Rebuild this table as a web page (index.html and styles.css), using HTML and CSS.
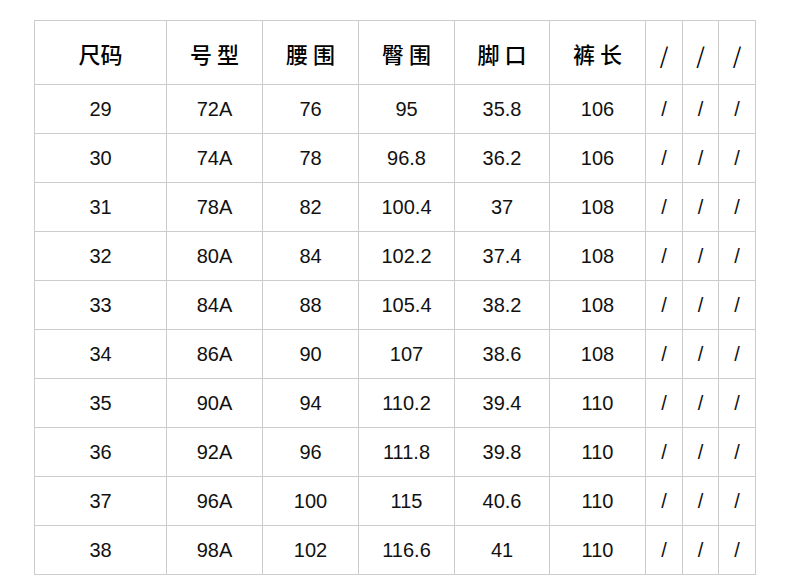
FILE: index.html
```html
<!DOCTYPE html>
<html lang="zh">
<head>
<meta charset="utf-8">
<link rel="stylesheet" href="styles.css">
</head>
<body>
<div class="table">
  <div class="cell head">尺码</div>
  <div class="cell head sp">号型</div>
  <div class="cell head sp">腰围</div>
  <div class="cell head sp">臀围</div>
  <div class="cell head sp">脚口</div>
  <div class="cell head sp">裤长</div>
  <div class="cell head slash">/</div>
  <div class="cell head slash">/</div>
  <div class="cell head slash">/</div>

  <div class="cell">29</div><div class="cell">72A</div><div class="cell">76</div><div class="cell">95</div><div class="cell">35.8</div><div class="cell">106</div><div class="cell">/</div><div class="cell">/</div><div class="cell">/</div>
  <div class="cell">30</div><div class="cell">74A</div><div class="cell">78</div><div class="cell">96.8</div><div class="cell">36.2</div><div class="cell">106</div><div class="cell">/</div><div class="cell">/</div><div class="cell">/</div>
  <div class="cell">31</div><div class="cell">78A</div><div class="cell">82</div><div class="cell">100.4</div><div class="cell">37</div><div class="cell">108</div><div class="cell">/</div><div class="cell">/</div><div class="cell">/</div>
  <div class="cell">32</div><div class="cell">80A</div><div class="cell">84</div><div class="cell">102.2</div><div class="cell">37.4</div><div class="cell">108</div><div class="cell">/</div><div class="cell">/</div><div class="cell">/</div>
  <div class="cell">33</div><div class="cell">84A</div><div class="cell">88</div><div class="cell">105.4</div><div class="cell">38.2</div><div class="cell">108</div><div class="cell">/</div><div class="cell">/</div><div class="cell">/</div>
  <div class="cell">34</div><div class="cell">86A</div><div class="cell">90</div><div class="cell">107</div><div class="cell">38.6</div><div class="cell">108</div><div class="cell">/</div><div class="cell">/</div><div class="cell">/</div>
  <div class="cell">35</div><div class="cell">90A</div><div class="cell">94</div><div class="cell">110.2</div><div class="cell">39.4</div><div class="cell">110</div><div class="cell">/</div><div class="cell">/</div><div class="cell">/</div>
  <div class="cell">36</div><div class="cell">92A</div><div class="cell">96</div><div class="cell">111.8</div><div class="cell">39.8</div><div class="cell">110</div><div class="cell">/</div><div class="cell">/</div><div class="cell">/</div>
  <div class="cell">37</div><div class="cell">96A</div><div class="cell">100</div><div class="cell">115</div><div class="cell">40.6</div><div class="cell">110</div><div class="cell">/</div><div class="cell">/</div><div class="cell">/</div>
  <div class="cell">38</div><div class="cell">98A</div><div class="cell">102</div><div class="cell">116.6</div><div class="cell">41</div><div class="cell">110</div><div class="cell">/</div><div class="cell">/</div><div class="cell">/</div>
</div>
</body>
</html>
```
FILE: styles.css
```css
html, body {
  margin: 0;
  padding: 0;
  background: #ffffff;
}
body {
  font-family: "Liberation Sans", "Noto Sans CJK SC", sans-serif;
  color: #111111;
}
.table {
  display: grid;
  grid-template-columns: 131px 95px 95px 95px 94px 95px 36px 35px 36px;
  grid-template-rows: 63px repeat(10, 48px);
  gap: 1px;
  padding: 1px;
  background: #cccccc;
  width: max-content;
  margin: 20px 0 0 34px;
}
.cell {
  background: #ffffff;
  display: flex;
  align-items: center;
  justify-content: center;
  font-size: 20px;
  line-height: 1;
}
.head {
  font-family: "Noto Sans CJK SC", sans-serif;
  font-weight: 500;
  font-size: 22px;
  color: #000000;
}
.sp {
  letter-spacing: 5px;
  text-indent: 5px;
}
.head.slash {
  font-weight: 400;
  font-size: 22px;
  padding-top: 2px;
}
```
